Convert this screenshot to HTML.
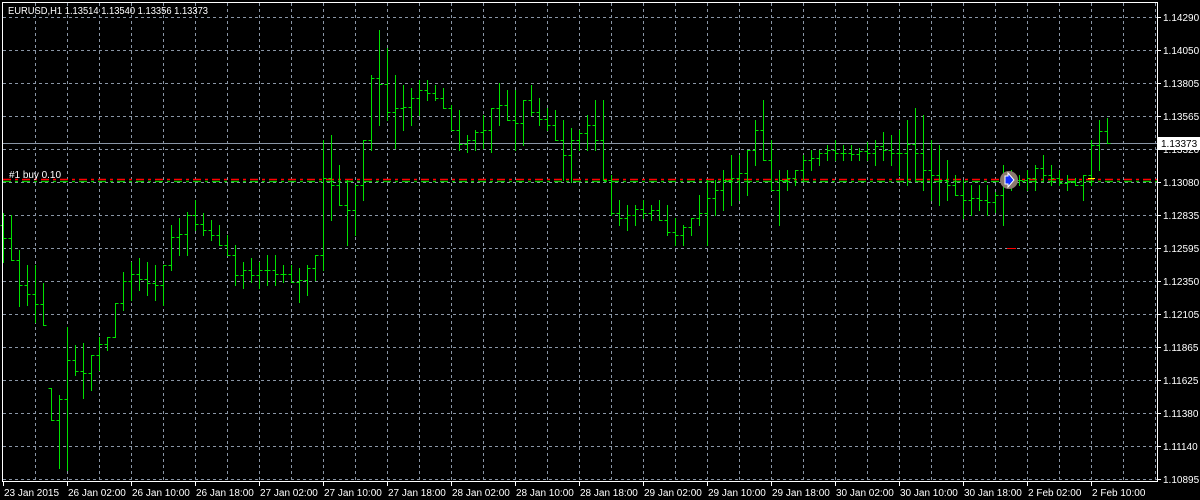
<!DOCTYPE html>
<html><head><meta charset="utf-8"><style>
html,body{margin:0;padding:0;background:#000;width:1200px;height:500px;overflow:hidden}
svg{display:block}
text{font-family:"Liberation Sans",sans-serif;font-size:10px;fill:#fff}
</style></head><body>
<svg id="s" width="1200" height="500" xmlns="http://www.w3.org/2000/svg">
<rect width="1200" height="500" fill="#000"/>
<g id="grid" stroke="#8a96a6" stroke-width="1" stroke-dasharray="3,3" fill="none"></g>
<line x1="3" y1="143.5" x2="1157" y2="143.5" stroke="#8a96a6"/>
<line x1="3" y1="179.5" x2="1157" y2="179.5" stroke="#ff0000" stroke-width="1.4" stroke-dasharray="8,4,3,4"/>
<line x1="3" y1="181.5" x2="1157" y2="181.5" stroke="#00d000" stroke-width="1.2" stroke-dasharray="8,4,3,4"/>
<g id="bars" stroke="#00e000" stroke-width="1" fill="none"></g>
<line x1="1007" y1="248.5" x2="1016" y2="248.5" stroke="#ff0000"/>
<line x1="1088" y1="178.5" x2="1095" y2="178.5" stroke="#ffff00"/>
<circle cx="1009" cy="180" r="9" fill="#8a7a70"/>
<path d="M1005 176 h3 v-3 l6 7 -6 7 v-3 h-3z" fill="#1030ff" stroke="#fff" stroke-width="1"/>
<text x="9" y="178" textLength="52">#1 buy 0.10</text>
<text x="8" y="14" textLength="200" lengthAdjust="spacingAndGlyphs">EURUSD,H1  1.13514 1.13540 1.13356 1.13373</text>
<rect x="2.5" y="2.5" width="1155" height="479" fill="none" stroke="#fff"/>
<g id="axis"></g>
<rect x="1158" y="137" width="42" height="13" fill="#fff"/>
<text x="1161" y="147" style="fill:#000">1.13373</text>
</svg>
<script>
var NS="http://www.w3.org/2000/svg";
function el(p,t,a,txt){var e=document.createElementNS(NS,t);for(var k in a)e.setAttribute(k,a[k]);if(txt)e.textContent=txt;p.appendChild(e);return e;}
var g=document.getElementById('grid'),ax=document.getElementById('axis'),b=document.getElementById('bars');
var d="";
for(var x=35;x<1157;x+=32)d+="M"+(x+.5)+" 3V481";
var prices=["1.14290","1.14050","1.13805","1.13565","1.13320","1.13080","1.12835","1.12595","1.12350","1.12105","1.11865","1.11625","1.11380","1.11140","1.10895"];
for(var i=0;i<15;i++){var y=Math.round(17+32.97*i);if(y<481)d+="M3 "+(y+.5)+"H1157";
el(ax,'line',{x1:1157,y1:y+.5,x2:1161,y2:y+.5,stroke:'#fff'});
el(ax,'text',{x:1163,y:y+4},prices[i]);}
el(g,'path',{d:d});
var labs=["23 Jan 2015","26 Jan 02:00","26 Jan 10:00","26 Jan 18:00","27 Jan 02:00","27 Jan 10:00","27 Jan 18:00","28 Jan 02:00","28 Jan 10:00","28 Jan 18:00","29 Jan 02:00","29 Jan 10:00","29 Jan 18:00","30 Jan 02:00","30 Jan 10:00","30 Jan 18:00","2 Feb 02:00","2 Feb 10:00"];
for(var i=0;i<labs.length;i++){var x=3+64*i;el(ax,'line',{x1:x+.5,y1:481,x2:x+.5,y2:486,stroke:'#fff'});el(ax,'text',{x:x+1,y:496},labs[i]);}
var hl=[[213,262],[215,260],[250,306],[265,305],[265,322],[283,325],[388,420],[395,468],[327,470],[345,375],[343,398],[355,390],[337,370],[337,350],[303,337],[272,310],[262,300],[258,290],[262,295],[265,300],[265,305],[225,270],[218,255],[212,255],[200,230],[213,235],[220,240],[225,245],[235,255],[245,285],[262,288],[258,282],[262,288],[255,285],[255,285],[265,282],[265,282],[268,302],[265,295],[255,280],[140,270],[135,220],[165,205],[180,245],[185,235],[140,200],[75,150],[30,125],[48,120],[75,148],[85,130],[88,125],[80,115],[80,100],[85,100],[88,108],[105,130],[110,150],[135,152],[130,150],[115,148],[108,152],[83,125],[90,120],[90,150],[100,145],[85,115],[98,125],[108,130],[110,140],[120,180],[128,182],[130,150],[115,150],[100,150],[100,180],[175,215],[200,225],[205,230],[205,225],[200,218],[205,220],[200,220],[205,235],[218,245],[225,245],[218,235],[195,225],[180,245],[180,215],[170,210],[155,205],[155,200],[150,195],[120,165],[100,160],[140,190],[170,225],[170,190],[170,185],[155,180],[150,170],[150,165],[145,160],[140,160],[145,160],[145,160],[148,160],[142,160],[140,165],[132,160],[135,165],[130,175],[120,185],[108,180],[115,190],[140,200],[145,205],[160,200],[175,195],[180,218],[185,215],[185,210],[185,215],[192,212],[165,225],[170,190],[175,185],[170,190],[165,190],[155,180],[165,185],[170,185],[175,190],[178,185],[175,200],[140,185],[120,170],[118,143]];
var prev=225,pd="";
for(var i=0;i<hl.length;i++){var h=hl[i][0],l=hl[i][1],x=3.5+8*i;
var o=Math.min(Math.max(prev,h),l);
var c;if(i+1<hl.length){var m=(hl[i+1][0]+hl[i+1][1])/2;c=Math.min(Math.max(Math.round(m),h),l);}else c=143;
pd+="M"+x+" "+h+"V"+(l+1)+"M"+(x-3)+" "+(o+.5)+"H"+x+"M"+x+" "+(c+.5)+"H"+(x+3);prev=c;}
el(b,'path',{d:pd});
</script>
</body></html>
